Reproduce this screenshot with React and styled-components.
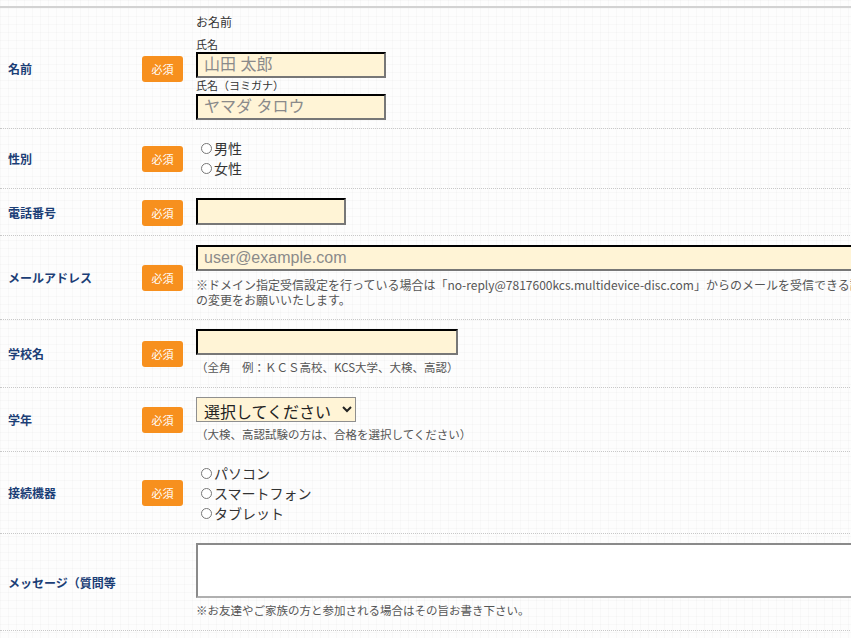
import React from 'react';
import styled, { createGlobalStyle } from 'styled-components';

const GlobalStyle = createGlobalStyle`
  html, body {
    margin: 0;
    padding: 0;
    overflow: hidden;
  }
  body {
    background-color: #fdfdfd;
    background-image:
      linear-gradient(to right, rgba(0, 0, 0, 0.018) 1px, transparent 1px),
      linear-gradient(to bottom, rgba(0, 0, 0, 0.018) 1px, transparent 1px);
    background-size: 8px 8px;
    font-family: "Noto Sans CJK JP", "Liberation Sans", sans-serif;
    color: #333;
  }
`;

const Form = styled.div`
  width: 1000px;
  margin-top: 6px;
  border-top: 2px solid #d2d2d2;
`;

const Row = styled.div`
  display: grid;
  grid-template-columns: 134px 62px 1fr;
  align-items: center;
  border-bottom: 1px dotted #c8c8c8;
`;

const Label = styled.div`
  padding-left: 8px;
  font-size: 12px;
  font-weight: bold;
  color: #1b3e76;
  white-space: nowrap;
`;

const BadgeCell = styled.div`
  padding-left: 8px;
`;

const Badge = styled.span`
  display: inline-flex;
  align-items: center;
  justify-content: center;
  width: 41px;
  height: 26px;
  border-radius: 3px;
  background: #f7901e;
  color: #fff;
  font-size: 11px;
`;

const Field = styled.div`
  padding: ${(p) => p.$pad || '9px 0'};
  display: flex;
  flex-direction: column;
  align-items: flex-start;
`;

const Caption = styled.div`
  font-size: ${(p) => (p.$big ? '12px' : '11px')};
  line-height: ${(p) => p.$lh || (p.$big ? '18px' : '14px')};
  color: #333;
  margin-bottom: ${(p) => p.$gap || '0'};
`;

const Input = styled.input`
  box-sizing: border-box;
  width: ${(p) => p.$w}px;
  height: ${(p) => p.$h || 26}px;
  margin: 0;
  padding: 0 6px;
  border: 2px inset #8a8a8a;
  border-color: #333 #777 #777 #333;
  background: #fff4d6;
  font-family: "Liberation Sans", "Noto Sans CJK JP", sans-serif;
  font-size: 16px;
  color: #333;
  &::placeholder {
    color: #8a8a8a;
  }
`;

const Note = styled.div`
  margin-top: ${(p) => p.$top || '5px'};
  font-size: ${(p) => p.$size || '11.5px'};
  line-height: 15px;
  color: #555;
  white-space: nowrap;
`;

const RadioList = styled.div`
  display: flex;
  flex-direction: column;
`;

const RadioLabel = styled.label`
  display: flex;
  align-items: center;
  font-size: 14px;
  line-height: 20px;
  color: #333;
  input {
    width: 11px;
    height: 11px;
    margin: 0 2px 0 5px;
  }
`;

const Select = styled.select`
  box-sizing: border-box;
  width: 160px;
  height: 25px;
  margin: 0;
  padding: 0 2px 0 3px;
  border: 1px solid #8f8f8f;
  background: #fff4d6;
  font-family: "Noto Sans CJK JP", "Liberation Sans", sans-serif;
  font-size: 16px;
  color: #222;
`;

const TextArea = styled.textarea`
  box-sizing: border-box;
  width: 760px;
  height: 55px;
  margin: 0;
  border: 2px solid #a0a0a0;
  border-color: #8a8a8a #b0b0b0 #b0b0b0 #8a8a8a;
  background: #fff;
  resize: none;
`;

const Radios = ({ name, items }) => (
  <RadioList>
    {items.map((item) => (
      <RadioLabel key={item}>
        <input type="radio" name={name} />
        {item}
      </RadioLabel>
    ))}
  </RadioList>
);

const Required = () => (
  <BadgeCell>
    <Badge>必須</Badge>
  </BadgeCell>
);

const App = () => (
  <>
    <GlobalStyle />
    <Form>
      <Row>
        <Label>名前</Label>
        <Required />
        <Field $pad="5px 0 8px">
          <Caption $big $gap="5px">お名前</Caption>
          <Caption $lh="16px">氏名</Caption>
          <Input $w={190} placeholder="山田 太郎" />
          <Caption $gap="2px">氏名（ヨミガナ）</Caption>
          <Input $w={190} placeholder="ヤマダ タロウ" />
        </Field>
      </Row>
      <Row>
        <Label>性別</Label>
        <Required />
        <Field $pad="9px 0 10px">
          <Radios name="sex" items={['男性', '女性']} />
        </Field>
      </Row>
      <Row>
        <Label>電話番号</Label>
        <Required />
        <Field $pad="9px 0 10px">
          <Input $w={150} $h={27} />
        </Field>
      </Row>
      <Row>
        <Label>メールアドレス</Label>
        <Required />
        <Field $pad="9px 0 12px">
          <Input $w={760} placeholder="user@example.com" />
          <Note $top="6px" $size="12px">
            ※ドメイン指定受信設定を行っている場合は「no-reply@7817600kcs.multidevice-disc.com」からのメールを受信できる設定へ
            <br />
            の変更をお願いいたします。
          </Note>
        </Field>
      </Row>
      <Row>
        <Label>学校名</Label>
        <Required />
        <Field $pad="9px 0 12px">
          <Input $w={262} />
          <Note>（全角　例：ＫＣＳ高校、KCS大学、大検、高認）</Note>
        </Field>
      </Row>
      <Row>
        <Label>学年</Label>
        <Required />
        <Field $pad="9px 0 9px">
          <Select defaultValue="">
            <option value="">選択してください</option>
          </Select>
          <Note>（大検、高認試験の方は、合格を選択してください）</Note>
        </Field>
      </Row>
      <Row>
        <Label>接続機器</Label>
        <Required />
        <Field $pad="11px 0 10px">
          <Radios name="device" items={['パソコン', 'スマートフォン', 'タブレット']} />
        </Field>
      </Row>
      <Row>
        <Label>メッセージ（質問等</Label>
        <div />
        <Field $pad="9px 0 12px">
          <TextArea />
          <Note>※お友達やご家族の方と参加される場合はその旨お書き下さい。</Note>
        </Field>
      </Row>
    </Form>
  </>
);

export default App;
